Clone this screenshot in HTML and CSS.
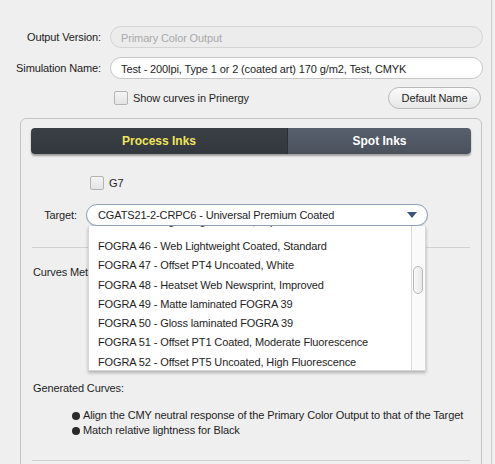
FILE: index.html
```html
<!DOCTYPE html>
<html>
<head>
<meta charset="utf-8">
<link rel="stylesheet" href="styles.css">
</head>
<body>
<div class="page">
  <div class="form">
    <div class="label">Output Version:</div>
    <div class="field disabled">Primary Color Output</div>
    <div class="label">Simulation Name:</div>
    <div class="field">Test - 200lpi, Type 1 or 2 (coated art) 170 g/m2, Test, CMYK</div>
    <div></div>
    <div class="row3">
      <label class="check"><span class="box"></span>Show curves in Prinergy</label>
      <div class="btn">Default Name</div>
    </div>
  </div>

  <div class="group">
    <div class="tabs">
      <div class="tab active">Process Inks</div>
      <div class="tab">Spot Inks</div>
    </div>
    <div class="g7row">
      <label class="check"><span class="box"></span>G7</label>
    </div>
    <div class="targetrow">
      <div class="tlabel">Target:</div>
      <div class="select">
        <span>CGATS21-2-CRPC6 - Universal Premium Coated</span>
        <span class="arrow"></span>
      </div>
    </div>
    <div class="sep"></div>
    <div class="curves">Curves Method:</div>
    <div class="gen">Generated Curves:</div>
    <ul class="bullets">
      <li>Align the CMY neutral response of the Primary Color Output to that of the Target</li>
      <li>Match relative lightness for Black</li>
    </ul>
    <div class="sep sep2"></div>

    <div class="dropdown">
      <div class="items">
        <div class="item partial"><span>FOGRA 45 - Lightweight Coated, Improved</span></div>
        <div class="item">FOGRA 46 - Web Lightweight Coated, Standard</div>
        <div class="item">FOGRA 47 - Offset PT4 Uncoated, White</div>
        <div class="item">FOGRA 48 - Heatset Web Newsprint, Improved</div>
        <div class="item">FOGRA 49 - Matte laminated FOGRA 39</div>
        <div class="item">FOGRA 50 - Gloss laminated FOGRA 39</div>
        <div class="item">FOGRA 51 - Offset PT1 Coated, Moderate Fluorescence</div>
        <div class="item">FOGRA 52 - Offset PT5 Uncoated, High Fluorescence</div>
      </div>
      <div class="scrollbar"><div class="thumb"></div></div>
    </div>
  </div>
</div>
</body>
</html>
```

FILE: styles.css
```css
html, body {
  margin: 0;
  padding: 0;
  background: #efefef;
}
body {
  font-family: "Liberation Sans", Arial, sans-serif;
  font-size: 11px;
  letter-spacing: -0.12px;
  color: #1e1e1e;
}
.page {
  width: 492px;
  height: 464px;
  border-right: 1px solid #c9c9c9;
  overflow: hidden;
  box-sizing: border-box;
}
.form {
  display: grid;
  grid-template-columns: 101px 373px;
  column-gap: 9px;
  row-gap: 9px;
  padding-top: 26px;
  align-items: center;
}
.label {
  text-align: right;
  color: #222;
}
.field {
  height: 22px;
  line-height: 22px;
  box-sizing: border-box;
  border: 1px solid #c6c6c6;
  border-radius: 11px;
  background: #fff;
  padding-left: 10px;
  white-space: nowrap;
  overflow: hidden;
}
.field.disabled {
  background: #ececec;
  border-color: #d4d4d4;
  color: #a9a9a9;
}
.row3 {
  display: flex;
  justify-content: space-between;
  align-items: center;
  width: 371px;
  margin-top: -1px;
}
.check {
  display: flex;
  align-items: center;
  gap: 5px;
}
.row3 .check {
  margin-left: 4px;
}
.box {
  width: 12px;
  height: 12px;
  border: 1px solid #b4b4b4;
  border-radius: 2px;
  background: linear-gradient(#f4f4f4, #e4e4e4);
  display: inline-block;
}
.btn {
  width: 93px;
  height: 22px;
  box-sizing: border-box;
  border: 1px solid #b9b9b9;
  border-radius: 11px;
  background: linear-gradient(#fbfbfb, #e7e7e7);
  text-align: center;
  line-height: 20px;
}
.group {
  position: relative;
  margin-top: 9px;
  margin-left: 20px;
  width: 462px;
  height: 400px;
  box-sizing: border-box;
  border: 1px solid #c4c4c4;
  border-radius: 6px;
  padding: 9px 10px 0 10px;
}
.tabs {
  display: flex;
  width: 440px;
  height: 26px;
  border-radius: 4px;
  overflow: hidden;
  box-shadow: 0 2px 2px rgba(0, 0, 0, 0.35);
  font-size: 12px;
  font-weight: bold;
  letter-spacing: 0;
}
.tab {
  display: flex;
  align-items: center;
  justify-content: center;
}
.tab.active {
  width: 256px;
  background: linear-gradient(#3a3e45, #33373e);
  color: #f0e45c;
  border-right: 1px solid #2c3036;
}
.tab:not(.active) {
  flex: 1;
  background: linear-gradient(#58606d, #4a515d);
  color: #ffffff;
}
.g7row {
  margin-top: 22px;
  padding-left: 59px;
  height: 13px;
}
.targetrow {
  display: flex;
  align-items: center;
  margin-top: 15px;
  height: 22px;
}
.tlabel {
  width: 46px;
  text-align: right;
  margin-right: 9px;
}
.select {
  position: relative;
  width: 342px;
  height: 22px;
  box-sizing: border-box;
  border: 1px solid #8fa2b6;
  border-radius: 11px;
  background: #fff;
  box-shadow: 0 1px 1px rgba(0, 0, 0, 0.12);
  padding-left: 11px;
  line-height: 20px;
}
.arrow {
  position: absolute;
  right: 10px;
  top: 7px;
  width: 0;
  height: 0;
  border-left: 5px solid transparent;
  border-right: 5px solid transparent;
  border-top: 6px solid #3c5876;
}
.sep {
  margin-top: 21px;
  margin-left: 1px;
  width: 438px;
  height: 1px;
  background: #d2d2d2;
}
.curves {
  margin-top: 18px;
  margin-left: 2px;
}
.gen {
  margin-top: 104px;
  margin-left: 2px;
}
.bullets {
  list-style: none;
  margin: 14px 0 0 0;
  padding: 0 0 0 41px;
}
.bullets li {
  position: relative;
  padding-left: 11px;
  line-height: 15px;
  white-space: nowrap;
}
.bullets li::before {
  content: "";
  position: absolute;
  left: 0;
  top: 4px;
  width: 8px;
  height: 8px;
  border-radius: 50%;
  background: #2a2a2a;
}
.sep2 {
  margin-top: 22px;
}
.dropdown {
  position: absolute;
  left: 67px;
  top: 107px;
  width: 338px;
  height: 145px;
  background: #fff;
  border: 1px solid #d6d6d6;
  border-top: none;
  box-sizing: border-box;
  box-shadow: 0 2px 3px rgba(0, 0, 0, 0.25);
  overflow: hidden;
}
.item {
  height: 19.25px;
  line-height: 19.25px;
  padding-left: 9px;
  white-space: nowrap;
}
.item.partial {
  height: 11px;
  overflow: hidden;
}
.item.partial span {
  display: block;
  margin-top: -14px;
}
.scrollbar {
  position: absolute;
  right: 0;
  top: 0;
  bottom: 0;
  width: 13px;
  border-left: 1px solid #dcdcdc;
  background: #fafafa;
}
.thumb {
  position: absolute;
  left: 1px;
  top: 40px;
  width: 10px;
  height: 28px;
  border: 1px solid #b8b8b8;
  border-radius: 6px;
  background: linear-gradient(90deg, #f8f8f8, #e8e8e8);
  box-sizing: border-box;
}
```
